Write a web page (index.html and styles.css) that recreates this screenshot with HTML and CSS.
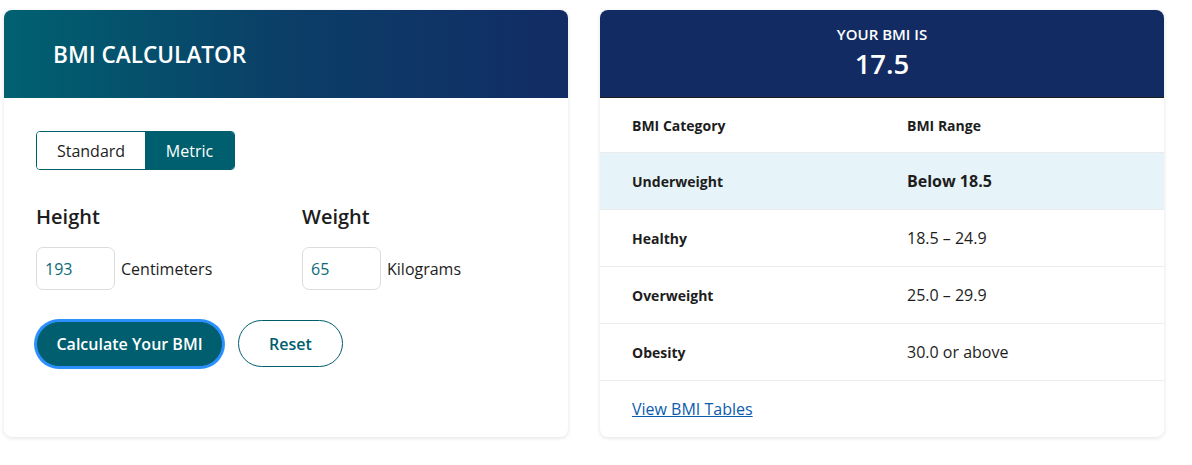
FILE: index.html
```html
<!DOCTYPE html>
<html lang="en">
<head>
<meta charset="utf-8">
<title>BMI Calculator</title>
<link rel="stylesheet" href="styles.css">
</head>
<body>
<div class="page">
  <section class="card calc">
    <header class="calc-head">
      <h1>BMI CALCULATOR</h1>
    </header>
    <div class="calc-body">
      <div class="toggle">
        <button class="seg">Standard</button>
        <button class="seg active">Metric</button>
      </div>
      <div class="fields">
        <div class="field">
          <h2>Height</h2>
          <div class="input-row">
            <div class="input">193</div>
            <span class="unit">Centimeters</span>
          </div>
        </div>
        <div class="field">
          <h2>Weight</h2>
          <div class="input-row">
            <div class="input">65</div>
            <span class="unit">Kilograms</span>
          </div>
        </div>
      </div>
      <div class="actions">
        <button class="btn primary">Calculate Your BMI</button>
        <button class="btn secondary">Reset</button>
      </div>
    </div>
  </section>
  <section class="card result">
    <header class="result-head">
      <div class="result-label">YOUR BMI IS</div>
      <div class="result-value">17.5</div>
    </header>
    <div class="table">
      <div class="row head"><span class="c1">BMI Category</span><span class="c2">BMI Range</span></div>
      <div class="row current"><span class="c1">Underweight</span><span class="c2 strong">Below 18.5</span></div>
      <div class="row"><span class="c1">Healthy</span><span class="c2">18.5 – 24.9</span></div>
      <div class="row"><span class="c1">Overweight</span><span class="c2">25.0 – 29.9</span></div>
      <div class="row"><span class="c1">Obesity</span><span class="c2">30.0 or above</span></div>
      <div class="row link-row"><a href="#" class="link">View BMI Tables</a></div>
    </div>
  </section>
</div>
</body>
</html>
```

FILE: styles.css
```css
* { box-sizing: border-box; }
html, body { margin: 0; padding: 0; background: #fff; }
body { font-family: "Open Sans", "Noto Sans", sans-serif; color: #1d1d1d; }

.page {
  display: flex;
  gap: 32px;
  padding: 10px 4px;
}

.card {
  width: 564px;
  height: 427px;
  background: #fff;
  border-radius: 8px;
  box-shadow: 0 1px 4px rgba(0,0,0,0.12);
  overflow: hidden;
  display: flex;
  flex-direction: column;
}

.calc-head {
  height: 88px;
  background: linear-gradient(90deg, #006171 0%, #0b3e67 50%, #122c64 100%);
  display: flex;
  align-items: center;
  padding-left: 49px;
  padding-top: 1px;
}
.calc-head h1 {
  margin: 0;
  color: #fff;
  font-size: 22.6px;
  font-weight: 600;
}

.calc-body { padding: 33px 32px 0; }

.toggle {
  display: inline-flex;
  border: 1px solid #005f6e;
  border-radius: 4px;
  overflow: hidden;
  height: 39px;
}
.seg {
  font-family: inherit;
  font-size: 16px;
  border: 0;
  background: #fff;
  color: #1d1d1d;
  padding: 0;
  width: 108px;
  cursor: pointer;
}
.seg.active {
  background: #005f6e;
  color: #fff;
  width: 89px;
}

.fields {
  display: flex;
  margin-top: 33px;
}
.field { flex: 0 0 266px; }
.field h2 {
  margin: 0;
  font-size: 20px;
  font-weight: 600;
  line-height: 27px;
  color: #1d1d1d;
}
.input-row {
  display: flex;
  align-items: center;
  gap: 6px;
  margin-top: 17px;
}
.input {
  width: 79px;
  height: 43px;
  border: 1px solid #dcdcdc;
  border-radius: 7px;
  display: flex;
  align-items: center;
  padding-left: 8px;
  color: #0a6a7a;
  font-size: 16px;
}
.unit { font-size: 16px; color: #1d1d1d; }

.actions {
  display: flex;
  align-items: center;
  gap: 16px;
  margin-top: 30px;
}
.btn {
  font-family: inherit;
  font-size: 16px;
  font-weight: 600;
  height: 47px;
  border-radius: 24px;
  cursor: pointer;
}
.btn.primary {
  width: 185px;
  margin-left: 1px;
  background: #005e6e;
  color: #fff;
  border: 1px solid #005e6e;
  box-shadow: 0 0 0 3px #2b8ffc;
  height: 44px;
}
.btn.secondary {
  width: 105px;
  background: #fff;
  color: #005e6e;
  border: 1px solid #005e6e;
}

.result-head {
  height: 88px;
  background: #122c63;
  border-bottom: 1px solid #1c1c1c;
  color: #fff;
  text-align: center;
  padding-top: 14px;
}
.result-label {
  font-size: 15px;
  font-weight: 600;
  line-height: 20px;
}
.result-value {
  font-size: 27.5px;
  font-weight: 600;
  line-height: 36px;
  margin-top: 2px;
}

.table { display: flex; flex-direction: column; }
.row {
  display: flex;
  align-items: center;
  height: 57px;
  padding-left: 32px;
  border-bottom: 1px solid #ebebeb;
}
.row.head { height: 55px; }
.row.current { background: #e6f3f8; }
.row.link-row { border-bottom: 0; height: 56px; }
.c1 {
  width: 275px;
  font-size: 14px;
  font-weight: 700;
  color: #1d1d1d;
}
.c2 { font-size: 16px; color: #1d1d1d; }
.row.head .c2 { font-size: 14px; font-weight: 700; }
.c2.strong { font-weight: 700; }
.link {
  font-size: 16px;
  color: #0b5cad;
  text-decoration: underline;
}
```
